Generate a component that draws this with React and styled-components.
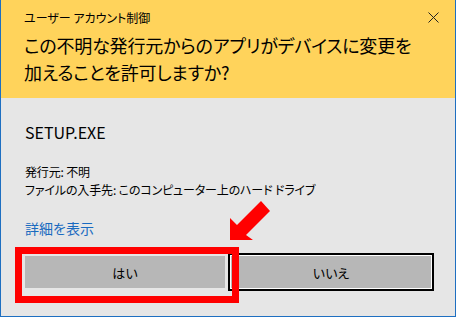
import React from "react";
import styled, { createGlobalStyle } from "styled-components";

const GlobalStyle = createGlobalStyle`
  html, body {
    margin: 0;
    padding: 0;
    background: #e6e6e6;
  }
  * {
    box-sizing: border-box;
  }
`;

const jp = `"Noto Sans CJK JP", "Noto Sans", sans-serif`;

const Dialog = styled.div`
  position: relative;
  width: 456px;
  height: 317px;
  border: 1px solid #1e6fc1;
  border-top: none;
  background: #e6e6e6;
  font-family: ${jp};
  font-feature-settings: "palt";
  color: #000;
  display: flex;
  flex-direction: column;
`;

const Header = styled.div`
  height: 98px;
  background: #ffd35b;
  padding: 0 0 0 23px;
`;

const TitleBar = styled.div`
  display: flex;
  justify-content: space-between;
  align-items: center;
  height: 33px;
  padding-top: 1px;
`;

const Caption = styled.span`
  font-size: 12px;
`;

const CloseButton = styled.button`
  width: 34px;
  height: 33px;
  margin-right: 5px;
  border: none;
  background: transparent;
  display: flex;
  align-items: center;
  justify-content: center;
  padding: 0;
`;

const Question = styled.div`
  font-size: 18px;
  letter-spacing: -0.2px;
  line-height: 27px;
  margin-top: -1px;
`;

const Body = styled.div`
  flex: 1;
  padding: 23px 21px 0 23px;
  display: flex;
  flex-direction: column;
`;

const AppName = styled.div`
  font-size: 16px;
  line-height: 22px;
  margin-left: 1px;
`;

const Details = styled.div`
  margin-top: 20px;
  font-size: 12px;
  letter-spacing: -0.15px;
  line-height: 18px;
  margin-left: 1px;
`;

const Link = styled.a`
  margin-top: 20px;
  margin-left: 1px;
  font-size: 14px;
  line-height: 18px;
  color: #1a6bc0;
  text-decoration: none;
`;

const Buttons = styled.div`
  display: flex;
  margin-top: 16px;
  margin-left: -2px;
`;

const Button = styled.button`
  width: 206px;
  height: 38px;
  font-family: ${jp};
  font-feature-settings: "palt";
  font-size: 13px;
  color: #000;
  background: #b7b7b7;
  background-clip: padding-box;
  padding: 0;
  border: ${(p) => (p.$focused ? "2px solid #000" : "3px solid transparent")};
  box-shadow: ${(p) => (p.$focused ? "inset 0 0 0 1px #fff" : "none")};
`;

const Highlight = styled.div`
  position: absolute;
  left: 14px;
  top: 247px;
  width: 224px;
  height: 56px;
  border: 7px solid #ff0000;
  pointer-events: none;
`;

const Arrow = styled.svg`
  position: absolute;
  left: 0;
  top: 0;
  pointer-events: none;
`;

export default function App() {
  return (
    <>
      <GlobalStyle />
      <Dialog>
        <Header>
          <TitleBar>
            <Caption>ユーザー アカウント制御</Caption>
            <CloseButton aria-label="閉じる">
              <svg width="11" height="11" viewBox="0 0 11 11">
                <path d="M0.5 0.5 L10.5 10.5 M10.5 0.5 L0.5 10.5" stroke="#222" strokeWidth="1" />
              </svg>
            </CloseButton>
          </TitleBar>
          <Question>
            この不明な発行元からのアプリがデバイスに変更を
            <br />
            加えることを許可しますか?
          </Question>
        </Header>
        <Body>
          <AppName>SETUP.EXE</AppName>
          <Details>
            発行元: 不明
            <br />
            ファイルの入手先: このコンピューター上のハード ドライブ
          </Details>
          <Link href="#">詳細を表示</Link>
          <Buttons>
            <Button>はい</Button>
            <Button $focused>いいえ</Button>
          </Buttons>
        </Body>
        <Highlight />
        <Arrow width="456" height="317" viewBox="0 0 456 317">
          <polygon
            points="230,240 230,218 237,225 261,201 270,211 246,235 253,240"
            fill="#ff0000"
            transform="translate(-1,0)"
          />
        </Arrow>
      </Dialog>
    </>
  );
}
